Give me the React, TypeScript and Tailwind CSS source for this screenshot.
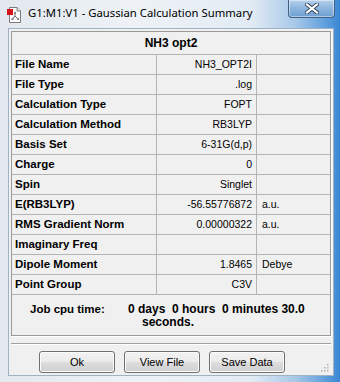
import React from "react";

const rows: [string, string, string][] = [
  ["File Name", "NH3_OPT2I", ""],
  ["File Type", ".log", ""],
  ["Calculation Type", "FOPT", ""],
  ["Calculation Method", "RB3LYP", ""],
  ["Basis Set", "6-31G(d,p)", ""],
  ["Charge", "0", ""],
  ["Spin", "Singlet", ""],
  ["E(RB3LYP)", "-56.55776872", "a.u."],
  ["RMS Gradient Norm", "0.00000322", "a.u."],
  ["Imaginary Freq", "", ""],
  ["Dipole Moment", "1.8465", "Debye"],
  ["Point Group", "C3V", ""],
];

function AppIcon() {
  return (
    <svg width="15" height="16" viewBox="0 0 15 16">
      <path d="M2.5 0.5 H10 L13.5 4 V15.5 H2.5 Z" fill="#fff" stroke="#7a7a7a" />
      <path d="M10 0.5 V4 H13.5" fill="#e8e8e8" stroke="#7a7a7a" />
      <rect x="0" y="2" width="6" height="6" fill="#d4141c" />
      <path d="M8 6 L8 9 L5.5 12 M8 9 L11 12" stroke="#6a6a6a" strokeWidth="1" fill="none" />
      <circle cx="8" cy="6" r="1.2" fill="#888" />
      <circle cx="5.5" cy="12" r="1.2" fill="#888" />
      <circle cx="11" cy="12" r="1.2" fill="#888" />
    </svg>
  );
}

function CloseButton() {
  return (
    <div className="absolute left-[288px] top-0 flex h-[18px] w-[47px] items-center justify-center rounded-b-[4px] border border-t-0 border-[#3f5f85] bg-[linear-gradient(180deg,#b4d0ec_0%,#8db5de_50%,#6c9fd3_100%)] shadow-[inset_0_0_0_1px_rgba(255,255,255,0.45)]">
      <svg width="14" height="11" viewBox="0 0 14 11">
        <path d="M2 1.5 L12 9.5 M12 1.5 L2 9.5" stroke="#2c3e55" strokeWidth="4" strokeLinecap="square" />
        <path d="M2 1.5 L12 9.5 M12 1.5 L2 9.5" stroke="#ffffff" strokeWidth="2.2" strokeLinecap="square" />
      </svg>
    </div>
  );
}

function Btn({ label }: { label: string }) {
  return (
    <div className="flex h-[22px] w-[76px] items-center justify-center rounded-[3px] border border-[#707070] bg-[linear-gradient(180deg,#f2f2f2_0%,#ebebeb_48%,#dddddd_52%,#cfcfcf_100%)] text-[11px] text-black shadow-[inset_0_0_0_1px_#fcfcfc] [font-family:'Liberation_Sans',Arial,sans-serif]">
      {label}
    </div>
  );
}

export default function App() {
  return (
    <div className="relative flex h-[382px] w-[340px] flex-col overflow-hidden bg-[linear-gradient(90deg,#e2e8ee_0%,#eef2f6_40%,#e2ebf4_74%,#a6c8e8_87%,#5d9ddc_96%,#3a86d4_100%)] [font-family:'Liberation_Sans',Arial,sans-serif]">
      {/* title bar */}
      <div className="relative flex h-[28px] shrink-0 items-start pl-[7px] pt-[7px]">
        <AppIcon />
        <div className="ml-[6px] mt-[-2px] text-[11.3px] leading-[16px] text-black [font-family:'Noto_Sans',sans-serif]">
          G1:M1:V1 - Gaussian Calculation Summary
        </div>
        <CloseButton />
      </div>

      {/* client area */}
      <div className="relative ml-[8px] flex h-[348px] w-[326px] flex-col border border-[#9fb2c6] bg-[#f0f0f0] pl-[2px] pr-[2px] pt-[2px]">
        {/* panel */}
        <div className="flex w-[320px] flex-col border border-[#9a9a9a] shadow-[1px_1px_0_0_#ffffff]">
          <div className="flex h-[23px] items-center justify-center border-b border-[#b4b4b4] text-[12px] font-bold text-black">
            NH3 opt2
          </div>
          {rows.map(([label, value, unit]) => (
            <div key={label} className="flex h-[20px] border-b border-[#b4b4b4] text-black">
              <div className="flex w-[145px] items-center border-r border-[#b4b4b4] pl-[3px] text-[11.5px] font-bold">
                {label}
              </div>
              <div className="flex w-[100px] items-center justify-end border-r border-[#b4b4b4] pr-[4px] text-[10.5px]">
                {value}
              </div>
              <div className="flex flex-1 items-center pl-[5px] text-[10.5px]">{unit}</div>
            </div>
          ))}
          <div className="flex h-[40px] pt-[8px] text-black">
            <div className="w-[116px] pl-[18px] text-[11.5px] font-bold leading-[13px]">Job cpu time:</div>
            <div className="flex flex-col text-[12px] font-bold leading-[13px]">
              <span className="whitespace-pre">0 days  0 hours  0 minutes 30.0</span>
              <span className="pl-[14px]">seconds.</span>
            </div>
          </div>
        </div>

        {/* separator */}
        <div className="mt-[7px] h-[2px] w-[320px] border-t border-b border-t-[#a0a0a0] border-b-white" />

        {/* buttons */}
        <div className="mt-[6px] flex gap-[9px] pl-[28px]">
          <Btn label="Ok" />
          <Btn label="View File" />
          <Btn label="Save Data" />
        </div>

        {/* resize grip */}
        <svg className="absolute bottom-[3px] right-[4px]" width="9" height="9" viewBox="0 0 9 9">
          {[
            [7, 1],
            [7, 4],
            [4, 4],
            [7, 7],
            [4, 7],
            [1, 7],
          ].map(([x, y]) => (
            <rect key={`${x}-${y}`} x={x} y={y} width="1.5" height="1.5" fill="#b0b0b0" />
          ))}
        </svg>
      </div>
    </div>
  );
}
